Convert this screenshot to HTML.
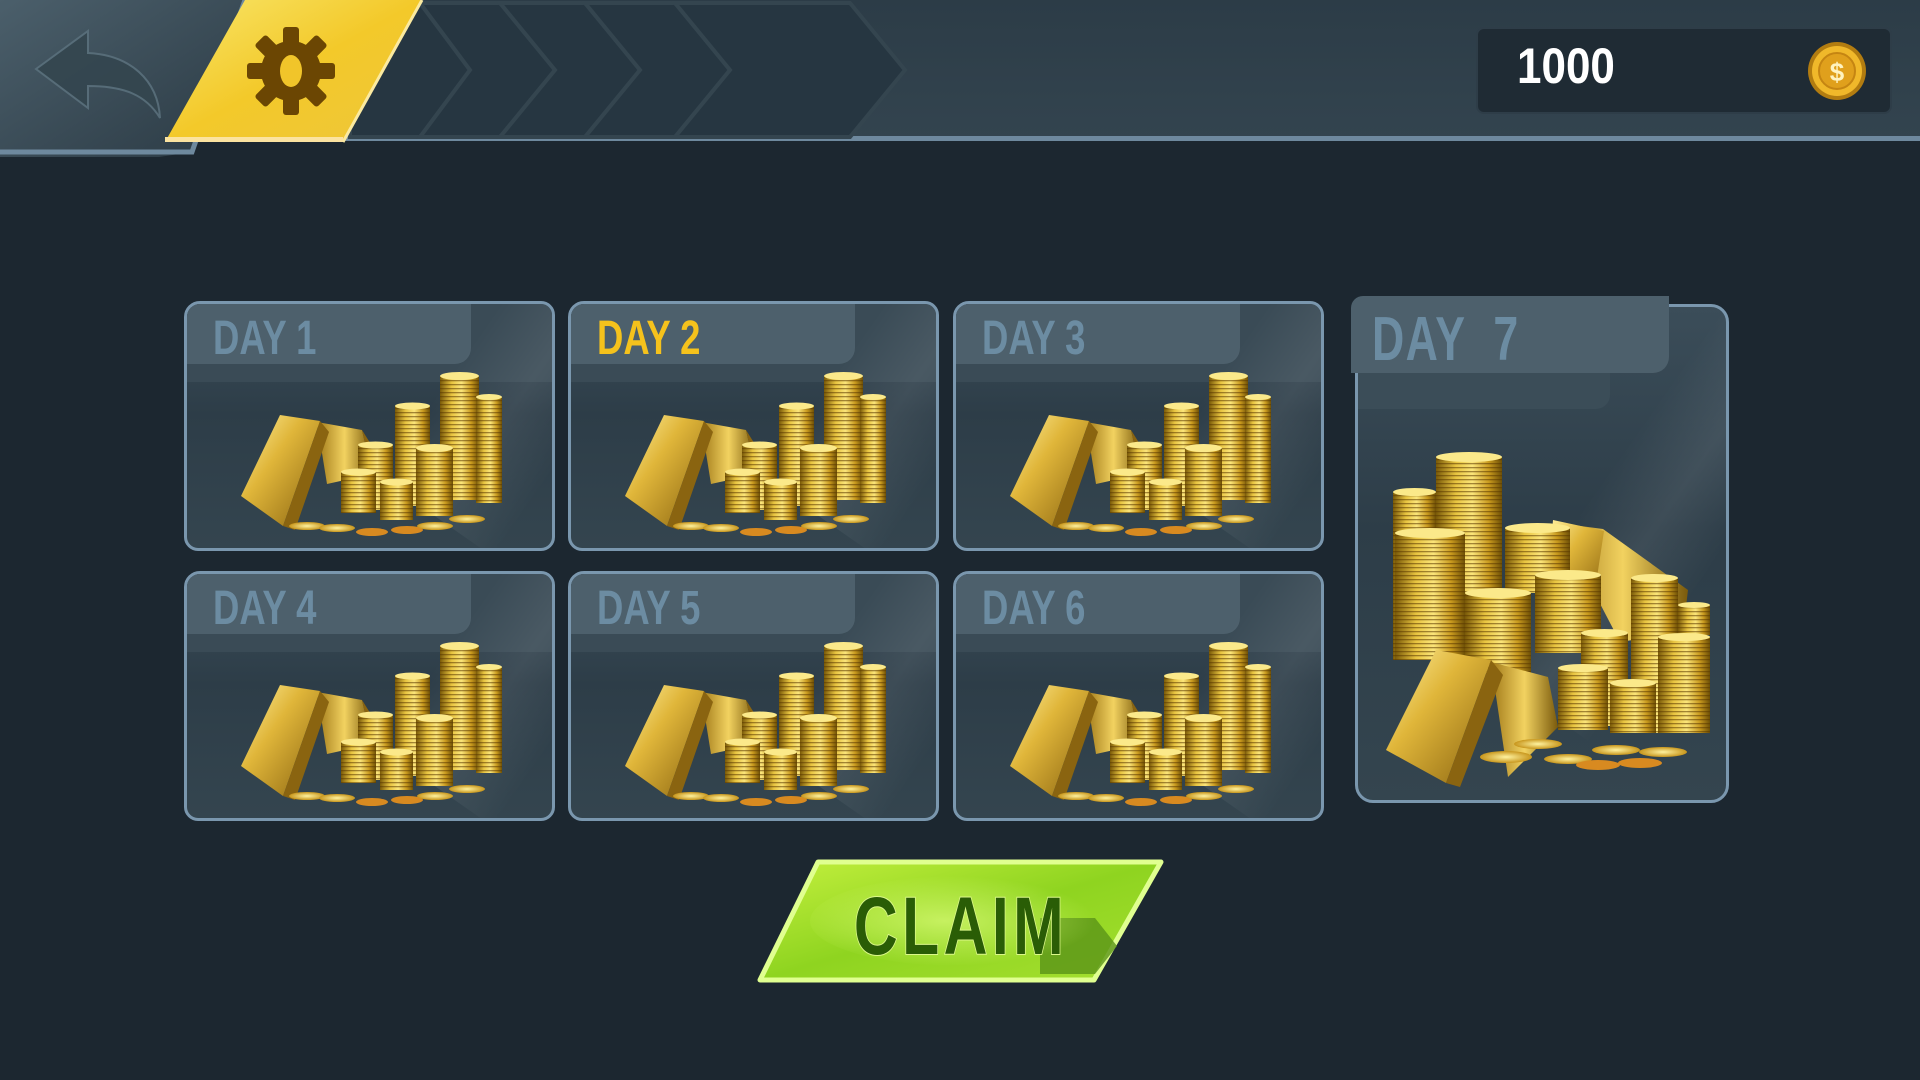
<!DOCTYPE html>
<html><head><meta charset="utf-8">
<style>
*{margin:0;padding:0;box-sizing:border-box}
body{width:1920px;height:1080px;overflow:hidden;background:#1c2730;font-family:"Liberation Sans",sans-serif;position:relative}
.card{position:absolute;width:371px;height:250px;border:3px solid #7a97ae;border-radius:16px 14px 14px 14px;background:linear-gradient(180deg,#3b4d59 0%,#2d3d48 45%,#34454f 100%);overflow:hidden}
.card .glare{position:absolute;right:-40px;top:-60px;width:140px;height:300px;background:linear-gradient(90deg,rgba(255,255,255,0) 0%,rgba(255,255,255,.08) 50%,rgba(255,255,255,0) 100%);transform:rotate(35deg)}
.card .band{position:absolute;left:0;top:0;width:100%;height:78px;background:#3a4b56}
.card .tab{position:absolute;left:0;top:0;width:284px;height:60px;background:#4d606c;border-radius:0 0 16px 0}
.card .lbl{position:absolute;left:26px;top:9px;font-weight:bold;font-size:48px;color:#6c8ca2;line-height:52px;transform:scaleX(.76);transform-origin:left;white-space:pre}
.card svg{position:absolute;left:0;top:0}
</style></head><body>
<svg width="0" height="0" style="position:absolute">
<defs>
<linearGradient id="cg" x1="0" x2="1" y1="0" y2="0"><stop offset="0" stop-color="#7a5a08"/><stop offset=".3" stop-color="#e8c440"/><stop offset=".55" stop-color="#fbe57a"/><stop offset=".8" stop-color="#c99a1e"/><stop offset="1" stop-color="#6e5006"/></linearGradient>
<pattern id="st" width="6" height="4" patternUnits="userSpaceOnUse"><rect width="6" height="1.3" fill="rgba(90,55,0,.55)"/></pattern>
<linearGradient id="bg1" x1="0" x2="1" y1="0" y2="1"><stop offset="0" stop-color="#fff0a0"/><stop offset=".4" stop-color="#e0b63a"/><stop offset="1" stop-color="#8a6410"/></linearGradient>
<linearGradient id="bg2" x1="0" x2="1" y1="0" y2="0"><stop offset="0" stop-color="#a07818"/><stop offset=".5" stop-color="#f2d260"/><stop offset="1" stop-color="#7a5a0c"/></linearGradient>
<radialGradient id="fc"><stop offset="0" stop-color="#fff3a0"/><stop offset="1" stop-color="#c8961c"/></radialGradient>
<g id="pile">
<polygon points="130,118 175,126 185,170 140,180" fill="url(#bg2)"/>
<polygon points="175,126 190,150 185,170" fill="#8a6410"/>
<g>
<rect x="253" y="72" width="39" height="124" fill="url(#cg)"/><rect x="253" y="72" width="39" height="124" fill="url(#st)"/><ellipse cx="272.5" cy="72" rx="19.5" ry="4" fill="#fbe98a"/>
<rect x="289" y="93" width="26" height="106" fill="url(#cg)"/><rect x="289" y="93" width="26" height="106" fill="url(#st)"/><ellipse cx="302" cy="93" rx="13" ry="3" fill="#fbe98a"/>
<rect x="208" y="102" width="35" height="100" fill="url(#cg)"/><rect x="208" y="102" width="35" height="100" fill="url(#st)"/><ellipse cx="225.5" cy="102" rx="17.5" ry="3.5" fill="#fbe98a"/>
<rect x="229" y="144" width="37" height="68" fill="url(#cg)"/><rect x="229" y="144" width="37" height="68" fill="url(#st)"/><ellipse cx="247.5" cy="144" rx="18.5" ry="4" fill="#fbe98a"/>
<rect x="171" y="141" width="35" height="65" fill="url(#cg)"/><rect x="171" y="141" width="35" height="65" fill="url(#st)"/><ellipse cx="188.5" cy="141" rx="17.5" ry="3.5" fill="#fbe98a"/>
<rect x="154" y="168" width="35" height="41" fill="url(#cg)"/><rect x="154" y="168" width="35" height="41" fill="url(#st)"/><ellipse cx="171.5" cy="168" rx="17.5" ry="3.5" fill="#fbe98a"/>
<rect x="193" y="178" width="33" height="38" fill="url(#cg)"/><rect x="193" y="178" width="33" height="38" fill="url(#st)"/><ellipse cx="209.5" cy="178" rx="16.5" ry="3.5" fill="#fbe98a"/>
</g>
<polygon points="54,192 93,111 133,117 96,222" fill="url(#bg1)"/>
<polygon points="96,222 133,117 142,128 108,226" fill="#8a6410"/>
<ellipse cx="120" cy="222" rx="18" ry="4" fill="url(#fc)"/>
<ellipse cx="150" cy="224" rx="18" ry="4" fill="url(#fc)"/>
<ellipse cx="185" cy="228" rx="16" ry="4" fill="#d88a20"/>
<ellipse cx="220" cy="226" rx="16" ry="4" fill="#d88a20"/>
<ellipse cx="248" cy="222" rx="18" ry="4" fill="url(#fc)"/>
<ellipse cx="280" cy="215" rx="18" ry="4" fill="url(#fc)"/>
</g>
</defs></svg>

<!-- header -->
<svg style="position:absolute;left:0;top:0" width="1920" height="160">
<defs>
<linearGradient id="hb" x1="0" x2="0" y1="0" y2="1"><stop offset="0" stop-color="#2c3c47"/><stop offset="1" stop-color="#33444f"/></linearGradient>
<linearGradient id="bk" x1="0" x2="1" y1="0" y2="1"><stop offset="0" stop-color="#4b5f6b"/><stop offset="1" stop-color="#2b3a44"/></linearGradient>
<linearGradient id="yl" x1="0" x2="1" y1="0" y2="1"><stop offset="0" stop-color="#f8e66a"/><stop offset=".5" stop-color="#f3c92a"/><stop offset="1" stop-color="#eec63a"/></linearGradient>
</defs>
<rect x="0" y="0" width="1920" height="140" fill="url(#hb)"/>
<rect x="0" y="136" width="1920" height="5" fill="#6e899e"/>
<g fill="#263641" stroke="#34454f" stroke-width="4">
<polygon points="350,3 420,3 470,70 420,137 350,137"/>
<polygon points="420,3 500,3 555,70 500,137 420,137 470,70"/>
<polygon points="500,3 585,3 640,70 585,137 500,137 555,70"/>
<polygon points="585,3 675,3 730,70 675,137 585,137 640,70"/>
<polygon points="675,3 850,3 905,70 850,137 675,137 730,70"/>
</g>
<polygon points="0,0 245,0 192,152 159,157 0,157" fill="url(#bk)"/>
<polyline points="245,0 192,152 0,152" fill="none" stroke="#6e899e" stroke-width="5"/>
<polygon points="245,0 422,0 343,142 165,142" fill="url(#yl)"/>
<line x1="422" y1="0" x2="343" y2="142" stroke="#fbeaa0" stroke-width="3"/>
<rect x="165" y="137" width="178" height="5" fill="#fbe3a0"/>
<path d="M36,69 L88,31 L88,53 C130,55 158,80 160,118 C146,95 124,86 88,86 L88,108 Z" fill="#34464f" stroke="#5a707c" stroke-width="2" opacity=".9"/>
<g transform="translate(291,71)" fill="#6b4603">
<circle r="30"/>
<g id="tooth"><rect x="-8" y="-44" width="16" height="20" rx="3"/></g>
<use href="#tooth" transform="rotate(45)"/><use href="#tooth" transform="rotate(90)"/><use href="#tooth" transform="rotate(135)"/><use href="#tooth" transform="rotate(180)"/><use href="#tooth" transform="rotate(225)"/><use href="#tooth" transform="rotate(270)"/><use href="#tooth" transform="rotate(315)"/>
<ellipse rx="11" ry="16" fill="#f1c52a"/>
</g>
</svg>
<div style="position:absolute;left:1476px;top:27px;width:416px;height:87px;background:#1f2b34;border-radius:8px;border:2px solid #2e3d48"></div>
<div style="position:absolute;left:1517px;top:36px;font-weight:bold;font-size:50px;color:#fff;line-height:60px;transform:scaleX(.88);transform-origin:left">1000</div>
<svg style="position:absolute;left:1806px;top:40px" width="62" height="62"><circle cx="31" cy="31" r="29" fill="#b27c10"/><circle cx="31" cy="31" r="25" fill="#f0b82a"/><circle cx="31" cy="31" r="18" fill="#e0a01c" stroke="#c58512" stroke-width="2"/><text x="31" y="41" text-anchor="middle" font-family="Liberation Sans" font-weight="bold" font-size="26" fill="#fff3c0">$</text></svg>

<!-- cards -->
<div class="card" style="left:184px;top:301px"><div class="band"></div><div class="tab"></div><div class="glare"></div><div class="lbl">DAY 1</div><svg width="371" height="250"><use href="#pile"/></svg></div>
<div class="card" style="left:568px;top:301px"><div class="band"></div><div class="tab"></div><div class="glare"></div><div class="lbl" style="color:#f5c21c">DAY 2</div><svg width="371" height="250"><use href="#pile"/></svg></div>
<div class="card" style="left:953px;top:301px"><div class="band"></div><div class="tab"></div><div class="glare"></div><div class="lbl">DAY 3</div><svg width="371" height="250"><use href="#pile"/></svg></div>
<div class="card" style="left:184px;top:571px"><div class="band"></div><div class="tab"></div><div class="glare"></div><div class="lbl">DAY 4</div><svg width="371" height="250"><use href="#pile"/></svg></div>
<div class="card" style="left:568px;top:571px"><div class="band"></div><div class="tab"></div><div class="glare"></div><div class="lbl">DAY 5</div><svg width="371" height="250"><use href="#pile"/></svg></div>
<div class="card" style="left:953px;top:571px"><div class="band"></div><div class="tab"></div><div class="glare"></div><div class="lbl">DAY 6</div><svg width="371" height="250"><use href="#pile"/></svg></div>

<!-- day 7 -->
<div class="card" style="left:1355px;top:304px;width:374px;height:499px;border-radius:18px">
<div style="position:absolute;left:0;top:0;width:252px;height:102px;background:#3b4d58;border-radius:0 0 14px 0"></div>
<div class="glare" style="height:500px;right:-20px"></div>
<svg width="374" height="499">
<polygon points="200,216 245,222 330,283 325,325 262,335" fill="url(#bg2)"/>
<polygon points="195,213 246,224 236,290 190,272" fill="url(#bg1)"/>
<g>
<rect x="35" y="185" width="43" height="168" fill="url(#cg)"/><rect x="35" y="185" width="43" height="168" fill="url(#st)"/><ellipse cx="56.5" cy="185" rx="21.5" ry="4" fill="#fbe98a"/>
<rect x="78" y="150" width="66" height="203" fill="url(#cg)"/><rect x="78" y="150" width="66" height="203" fill="url(#st)"/><ellipse cx="111" cy="150" rx="33" ry="5" fill="#fbe98a"/>
<rect x="37" y="226" width="70" height="127" fill="url(#cg)"/><rect x="37" y="226" width="70" height="127" fill="url(#st)"/><ellipse cx="72" cy="226" rx="35" ry="5" fill="#fbe98a"/>
<rect x="147" y="221" width="65" height="65" fill="url(#cg)"/><rect x="147" y="221" width="65" height="65" fill="url(#st)"/><ellipse cx="179.5" cy="221" rx="32.5" ry="5" fill="#fbe98a"/>
<rect x="107" y="286" width="66" height="80" fill="url(#cg)"/><rect x="107" y="286" width="66" height="80" fill="url(#st)"/><ellipse cx="140" cy="286" rx="33" ry="5" fill="#fbe98a"/>
<rect x="177" y="268" width="66" height="78" fill="url(#cg)"/><rect x="177" y="268" width="66" height="78" fill="url(#st)"/><ellipse cx="210" cy="268" rx="33" ry="5" fill="#fbe98a"/>
<rect x="273" y="271" width="47" height="155" fill="url(#cg)"/><rect x="273" y="271" width="47" height="155" fill="url(#st)"/><ellipse cx="296.5" cy="271" rx="23.5" ry="4" fill="#fbe98a"/>
<rect x="320" y="298" width="32" height="30" fill="url(#cg)"/><rect x="320" y="298" width="32" height="30" fill="url(#st)"/><ellipse cx="336" cy="298" rx="16" ry="3" fill="#fbe98a"/>
<rect x="223" y="326" width="47" height="93" fill="url(#cg)"/><rect x="223" y="326" width="47" height="93" fill="url(#st)"/><ellipse cx="246.5" cy="326" rx="23.5" ry="4" fill="#fbe98a"/>
<rect x="200" y="361" width="50" height="62" fill="url(#cg)"/><rect x="200" y="361" width="50" height="62" fill="url(#st)"/><ellipse cx="225" cy="361" rx="25" ry="4" fill="#fbe98a"/>
<rect x="252" y="376" width="46" height="50" fill="url(#cg)"/><rect x="252" y="376" width="46" height="50" fill="url(#st)"/><ellipse cx="275" cy="376" rx="23" ry="4" fill="#fbe98a"/>
<rect x="300" y="330" width="52" height="96" fill="url(#cg)"/><rect x="300" y="330" width="52" height="96" fill="url(#st)"/><ellipse cx="326" cy="330" rx="26" ry="4" fill="#fbe98a"/>
</g>
<polygon points="133,355 190,370 200,420 150,470" fill="url(#bg2)"/>
<polygon points="28,443 78,343 133,353 88,476" fill="url(#bg1)"/>
<polygon points="88,476 133,353 145,368 102,480" fill="#8a6410"/>
<ellipse cx="148" cy="450" rx="26" ry="6" fill="url(#fc)"/>
<ellipse cx="180" cy="437" rx="24" ry="5" fill="url(#fc)"/>
<ellipse cx="210" cy="452" rx="24" ry="5" fill="url(#fc)"/>
<ellipse cx="240" cy="458" rx="22" ry="5" fill="#d88a20"/>
<ellipse cx="282" cy="456" rx="22" ry="5" fill="#d88a20"/>
<ellipse cx="305" cy="445" rx="24" ry="5" fill="url(#fc)"/>
<ellipse cx="258" cy="443" rx="24" ry="5" fill="url(#fc)"/>
</svg>
</div>
<div style="position:absolute;left:1351px;top:296px;width:318px;height:77px;background:#4d606c;border-radius:12px 0 16px 0"></div>
<div style="position:absolute;left:1372px;top:307px;font-weight:bold;font-size:62px;color:#6c8ca2;line-height:66px;letter-spacing:2px;white-space:pre;transform:scaleX(.72);transform-origin:left">DAY  7</div>

<!-- claim -->
<svg style="position:absolute;left:755px;top:858px" width="412" height="128">
<defs>
<linearGradient id="gr" x1="0" x2="1" y1="0" y2="1"><stop offset="0" stop-color="#c4f03e"/><stop offset=".5" stop-color="#8fd420"/><stop offset="1" stop-color="#a6e030"/></linearGradient>
<radialGradient id="gw" cx=".45" cy=".5" r=".5"><stop offset="0" stop-color="#d4f870" stop-opacity=".8"/><stop offset="1" stop-color="#d4f870" stop-opacity="0"/></radialGradient>
</defs>
<polygon points="63,4 406,4 339,122 5,122" fill="url(#gr)" stroke="#e0ff90" stroke-width="5" stroke-linejoin="round"/>
<polygon points="285,60 340,60 362,88 340,116 285,116" fill="#5a9418" opacity=".8"/>
<ellipse cx="205" cy="63" rx="150" ry="45" fill="url(#gw)"/>
<text x="0" y="0" transform="translate(206,96) scale(.74,1)" text-anchor="middle" font-family="Liberation Sans, sans-serif" font-weight="bold" font-size="82" letter-spacing="6" fill="#2a5d06" stroke="#dcf88a" stroke-width="2" paint-order="stroke">CLAIM</text>
</svg>
</body></html>
